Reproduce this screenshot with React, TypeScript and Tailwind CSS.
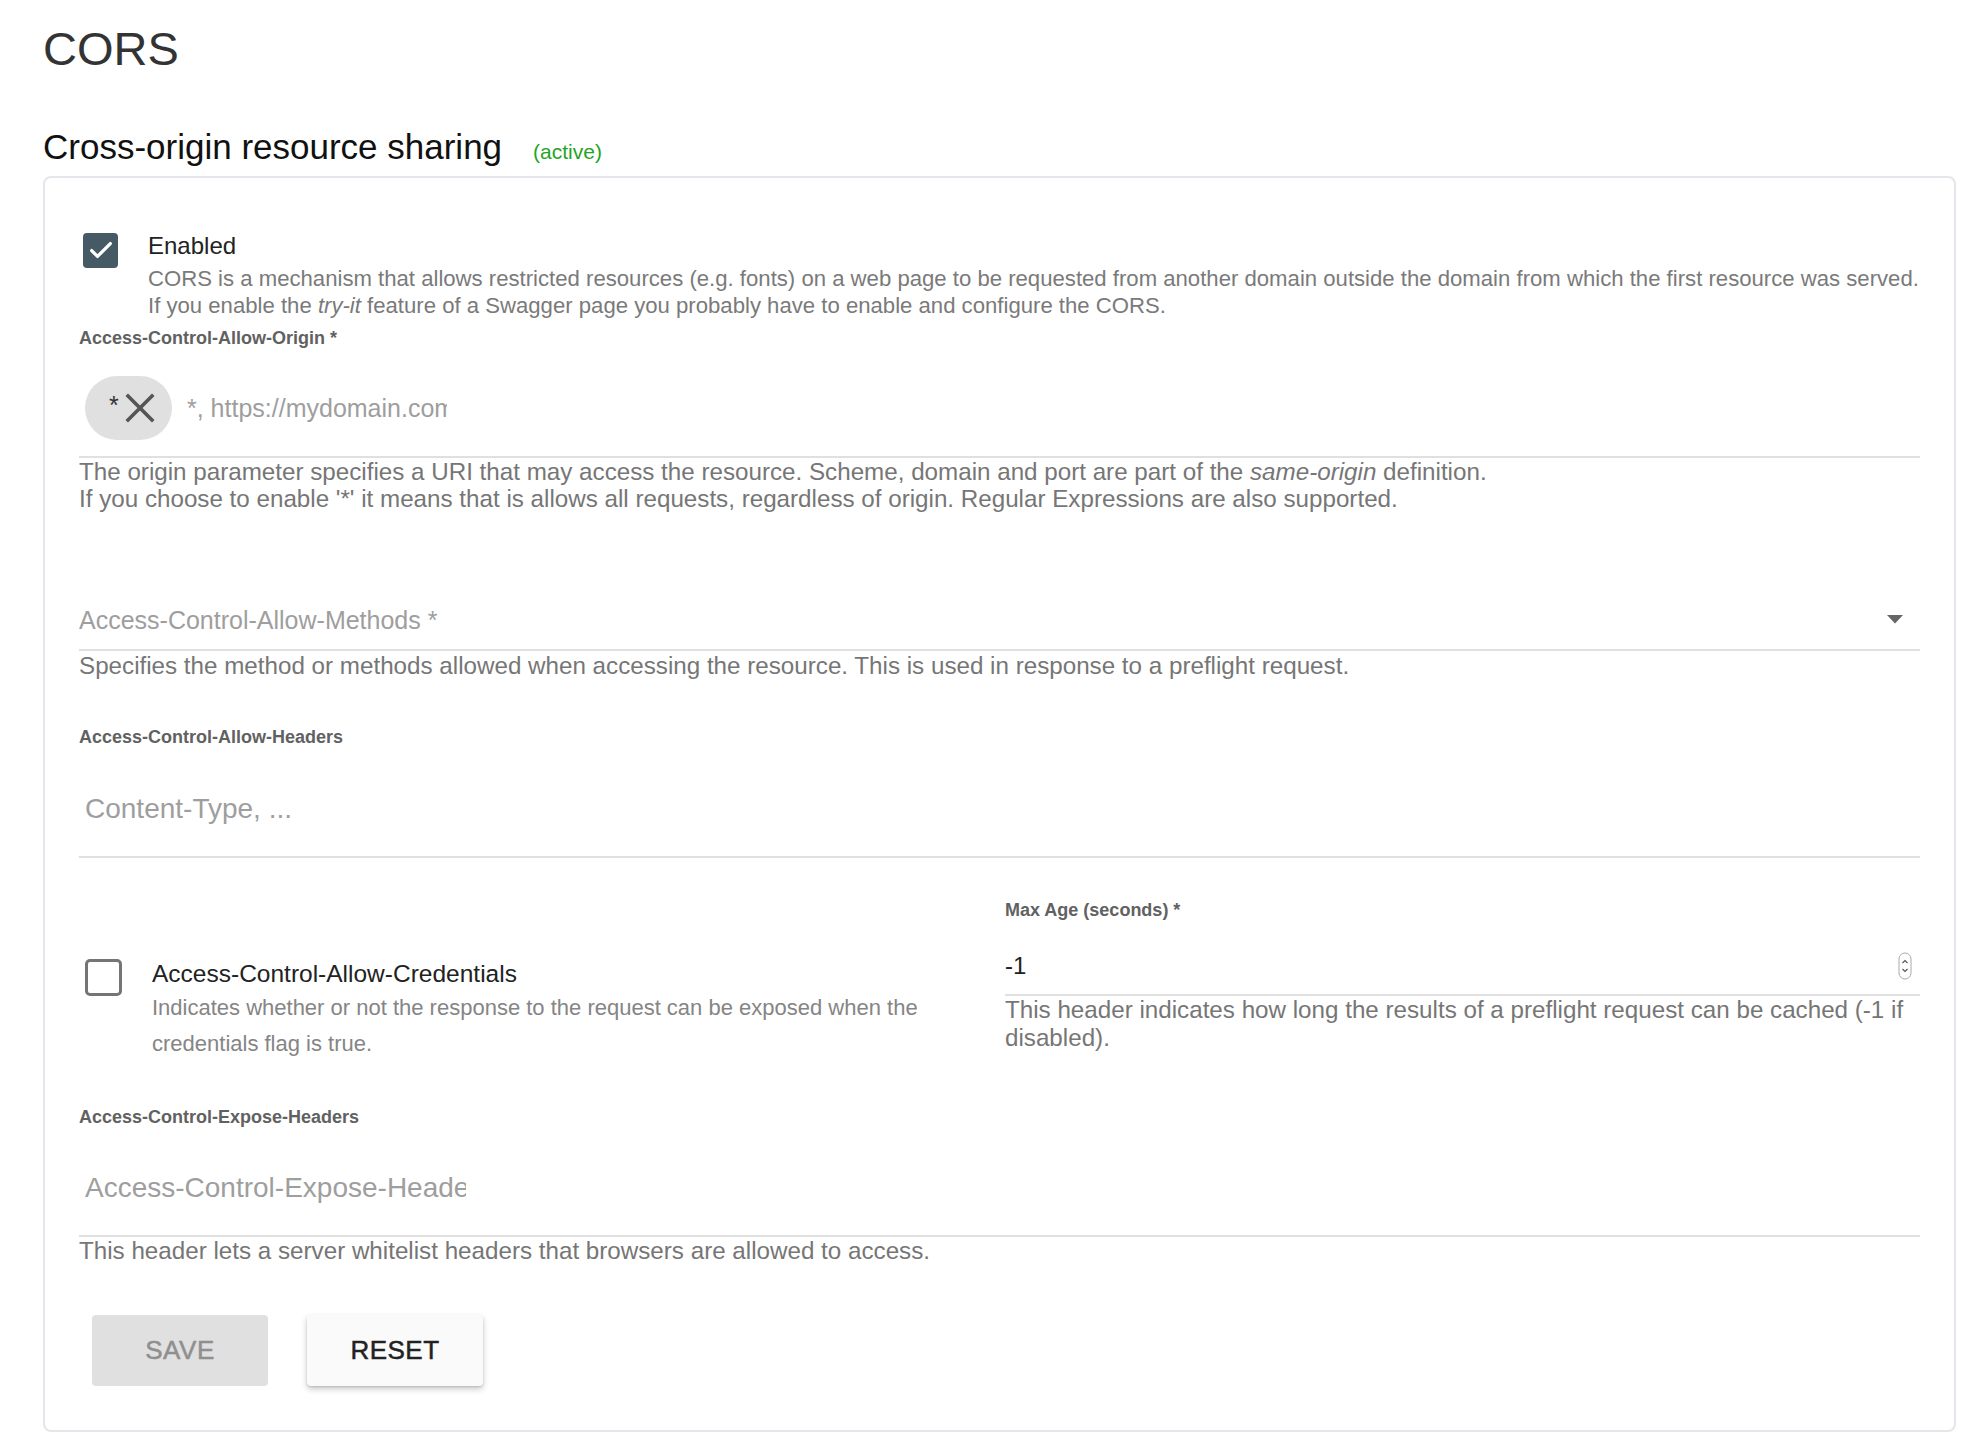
import React from 'react';

function CheckedBox() {
  return (
    <div className="w-[35px] h-[35px] rounded-[4px] bg-[#455a64] flex items-center justify-center">
      <svg width="28" height="28" viewBox="0 0 24 24">
        <path d="M4 12.5l5 5 11-11" fill="none" stroke="#fff" strokeWidth="2.8" strokeLinecap="round" strokeLinejoin="round" />
      </svg>
    </div>
  );
}

function EmptyBox() {
  return <div className="w-[37px] h-[37px] rounded-[5px] border-[3px] border-[#757575] bg-white" />;
}

function Label({ children }: { children: React.ReactNode }) {
  return <div className="text-[18px] leading-[22px] font-bold text-[#616161]">{children}</div>;
}

export default function App() {
  return (
    <div className="min-h-screen bg-white font-['Liberation_Sans',Arial,sans-serif] pl-[43px] pr-[14px] pt-[21px] pb-[24px]">
      <h1 className="text-[47px] leading-[56px] text-[#333]">CORS</h1>

      <div className="mt-[50px] flex items-baseline gap-[31px]">
        <h2 className="text-[35px] leading-[40px] text-[#111]">Cross-origin resource sharing</h2>
        <span className="text-[21px] text-[#1fa51f]">(active)</span>
      </div>

      <div className="mt-[8px] border-2 border-[#e3e6ea] rounded-[8px] pt-[54px] pb-[44px] px-[34px]">
        {/* enabled */}
        <div className="flex items-start">
          <div className="ml-[4px] mt-[1px]">
            <CheckedBox />
          </div>
          <div className="ml-[30px]">
            <div className="text-[24px] leading-[28px] text-[#222]">Enabled</div>
            <div className="mt-[5px] text-[22.15px] leading-[27px] text-[#7a7a7a]">
              <div>
                CORS is a mechanism that allows restricted resources (e.g. fonts) on a web page to be requested from another domain outside the domain from which the first resource was served.
              </div>
              <div>
                If you enable the <i>try-it</i> feature of a Swagger page you probably have to enable and configure the CORS.
              </div>
            </div>
          </div>
        </div>

        {/* origin */}
        <div className="mt-[8px]">
          <Label>Access-Control-Allow-Origin *</Label>
        </div>
        <div className="mt-[27px] flex items-center pb-[16px] border-b-2 border-[#e0e0e0]">
          <div className="ml-[6px] w-[87px] h-[64px] rounded-full bg-[#e0e0e0] flex items-center pl-[24px] gap-[5px]">
            <span className="text-[25px] leading-none text-[#333] mt-[-5px]">*</span>
            <svg width="32" height="32" viewBox="0 0 32 32">
              <path d="M4 4L28 28M28 4L4 28" stroke="#555" strokeWidth="3.6" strokeLinecap="square" />
            </svg>
          </div>
          <input
            className="ml-[15px] w-[260px] text-[25px] leading-[30px] text-[#222] placeholder:text-[#9e9e9e] outline-none bg-transparent"
            placeholder="*, https://mydomain.com"
          />
        </div>
        <div className="text-[24.2px] leading-[27px] text-[#767676]">
          <div>
            The origin parameter specifies a URI that may access the resource. Scheme, domain and port are part of the <i>same-origin</i> definition.
          </div>
          <div>
            If you choose to enable '*' it means that is allows all requests, regardless of origin. Regular Expressions are also supported.
          </div>
        </div>

        {/* methods */}
        <div className="mt-[93px] flex items-center justify-between pb-[14px] border-b-2 border-[#e0e0e0]">
          <span className="text-[25px] leading-[30px] text-[#9e9e9e]">Access-Control-Allow-Methods *</span>
          <svg width="16" height="9" viewBox="0 0 16 9" className="mr-[17px]">
            <path d="M0 0H16L8 8.5Z" fill="#666" />
          </svg>
        </div>
        <div className="mt-[1px] text-[24.2px] leading-[27px] text-[#767676]">
          Specifies the method or methods allowed when accessing the resource. This is used in response to a preflight request.
        </div>

        {/* allow headers */}
        <div className="mt-[47px]">
          <Label>Access-Control-Allow-Headers</Label>
        </div>
        <div className="mt-[29px] h-[81px] flex items-start pt-[16px] border-b-2 border-[#e0e0e0]">
          <input
            className="ml-[6px] w-[400px] text-[28px] leading-[32px] text-[#222] placeholder:text-[#9e9e9e] outline-none bg-transparent"
            placeholder="Content-Type, ..."
          />
        </div>

        {/* credentials + max age */}
        <div className="mt-[41px] grid grid-cols-2 gap-x-[11px]">
          <div className="pt-[60px] pr-[40px] flex items-start">
            <div className="ml-[6px]">
              <EmptyBox />
            </div>
            <div className="ml-[30px]">
              <div className="text-[24.5px] leading-[30px] text-[#222]">Access-Control-Allow-Credentials</div>
              <div className="mt-[1px] text-[22px] leading-[36px] text-[#858585]">
                Indicates whether or not the response to the request can be exposed when the credentials flag is true.
              </div>
            </div>
          </div>
          <div>
            <Label>Max Age (seconds) *</Label>
            <div className="mt-[30px] flex items-center justify-between pb-[13px] border-b-2 border-[#e0e0e0]">
              <span className="text-[24px] leading-[30px] text-[#222]">-1</span>
              <svg width="14" height="28" viewBox="0 0 14 28" className="mr-[8px]">
                <rect x="1" y="1" width="12" height="26" rx="6" fill="none" stroke="#aaa" strokeWidth="1" />
                <path d="M4.5 11L7 8.5L9.5 11M4.5 17L7 19.5L9.5 17" fill="none" stroke="#555" strokeWidth="1.2" />
              </svg>
            </div>
            <div className="text-[24.2px] leading-[28px] text-[#767676]">
              This header indicates how long the results of a preflight request can be cached (-1 if disabled).
            </div>
          </div>
        </div>

        {/* expose headers */}
        <div className="mt-[44px]">
          <Label>Access-Control-Expose-Headers</Label>
        </div>
        <div className="mt-[29px] h-[80px] flex items-center pb-[16px] border-b-2 border-[#e0e0e0]">
          <input
            className="ml-[6px] w-[381px] text-[28px] leading-[32px] text-[#222] placeholder:text-[#9e9e9e] outline-none bg-transparent"
            placeholder="Access-Control-Expose-Headers"
          />
        </div>
        <div className="text-[24.2px] leading-[27px] text-[#767676]">
          This header lets a server whitelist headers that browsers are allowed to access.
        </div>

        {/* buttons */}
        <div className="mt-[51px] ml-[13px] flex gap-[39px]">
          <button className="w-[176px] h-[71px] rounded-[4px] bg-[#e0e0e0] text-[26px] text-[#8f8f8f] tracking-[0.5px] [-webkit-text-stroke:0.5px_#8f8f8f]">
            SAVE
          </button>
          <button className="w-[176px] h-[71px] rounded-[4px] bg-[#fafafa] text-[26px] text-[#222] tracking-[0.5px] [-webkit-text-stroke:0.5px_#222] shadow-[0_3px_6px_rgba(0,0,0,0.22),0_1px_2px_rgba(0,0,0,0.12)]">
            RESET
          </button>
        </div>
      </div>
    </div>
  );
}
